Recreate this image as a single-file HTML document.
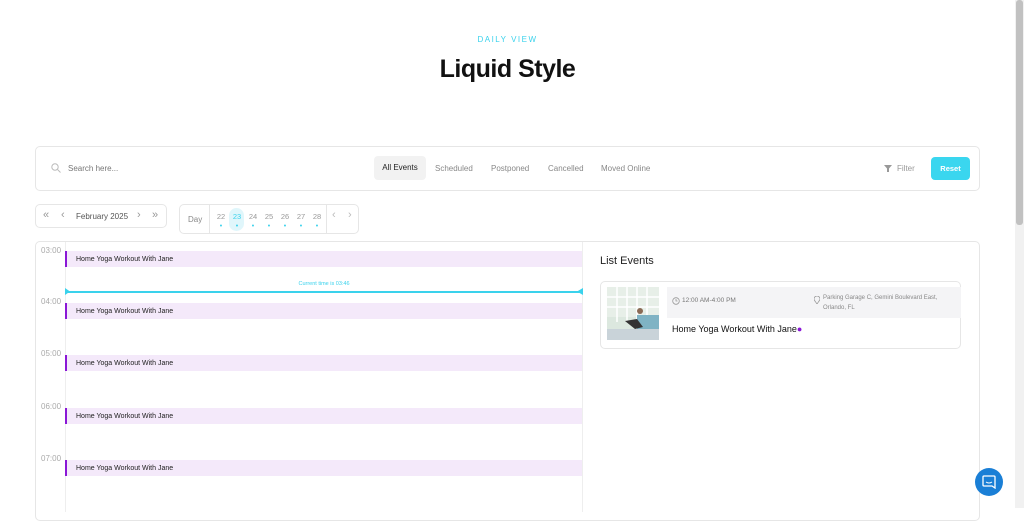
<!DOCTYPE html><html><head><style>
*{box-sizing:border-box;margin:0;padding:0}
body{width:1024px;height:508px;overflow:hidden;background:#fff;font-family:"Liberation Sans",sans-serif;position:relative;color:#222}
.a{position:absolute}
.sb{right:0;top:0;width:9px;height:508px;background:#f1f1f1}
.sb div{position:absolute;left:1px;top:0;width:7px;height:225px;background:#c1c1c1;border-radius:3px}
.box{border:1px solid #e6e6e6;border-radius:5px;background:#fff}
.t{font-size:8px;color:#666}
.ev{left:65px;width:517px;height:16px;background:#f4e9fa;border-left:2px solid #8a17d6;font-size:7px;color:#222;padding:5px 0 0 9px}
.tm{left:41px;font-size:8px;color:#aaa}
.nv{font-size:11px;color:#999;line-height:11px}
</style></head><body>
<div class="a sb"><div></div></div>
<div class="a" style="left:0;width:1015px;top:35px;text-align:center;font-size:8px;letter-spacing:1.5px;color:#3ad2ec">DAILY VIEW</div>
<div class="a" style="left:0;width:1015px;top:55px;text-align:center;font-size:25px;font-weight:bold;color:#111;letter-spacing:-0.5px">Liquid Style</div>

<div class="a box" style="left:35px;top:146px;width:945px;height:45px"></div>
<svg class="a" style="left:51px;top:163px" width="10" height="10"><circle cx="4" cy="4" r="3.2" fill="none" stroke="#bbb" stroke-width="1"/><path d="M6.5 6.5L9.5 9.5" stroke="#bbb"/></svg>
<div class="a t" style="left:68px;top:164px;color:#777">Search here...</div>
<div class="a" style="left:374px;top:156px;width:52px;height:24px;background:#f2f2f2;border-radius:4px;font-size:8px;color:#222;text-align:center;line-height:24px">All Events</div>
<div class="a t" style="left:435px;top:164px;color:#888">Scheduled</div>
<div class="a t" style="left:491px;top:164px;color:#888">Postponed</div>
<div class="a t" style="left:548px;top:164px;color:#888">Cancelled</div>
<div class="a t" style="left:601px;top:164px;color:#888">Moved Online</div>
<svg class="a" style="left:884px;top:165px" width="8" height="7"><path d="M0 0H8L5 3.5V7H3V3.5Z" fill="#999"/></svg>
<div class="a t" style="left:897px;top:164px;color:#999">Filter</div>
<div class="a" style="left:931px;top:157px;width:39px;height:23px;background:#3ad6ef;border-radius:4px;color:#fff;font-size:7.5px;font-weight:bold;text-align:center;line-height:23px">Reset</div>

<div class="a box" style="left:35px;top:204px;width:132px;height:24px"></div>
<div class="a nv" style="left:43px;top:210px">«</div>
<div class="a nv" style="left:61px;top:210px">‹</div>
<div class="a t" style="left:76px;top:212px;color:#555">February 2025</div>
<div class="a nv" style="left:137px;top:210px">›</div>
<div class="a nv" style="left:152px;top:210px">»</div>

<div class="a box" style="left:179px;top:204px;width:180px;height:30px"></div>
<div class="a" style="left:209px;top:204px;width:1px;height:30px;background:#e6e6e6"></div>
<div class="a" style="left:326px;top:204px;width:1px;height:30px;background:#e6e6e6"></div>
<div class="a t" style="left:188px;top:215px;color:#888">Day</div>
<div class="a" style="left:229px;top:208px;width:15px;height:23px;border-radius:8px;background:#e0f6fb"></div>
<div class="a" style="left:213px;top:212px;font-size:7.5px;color:#999;letter-spacing:0">
<span style="display:inline-block;width:16px;text-align:center">22</span><span style="display:inline-block;width:16px;text-align:center;color:#3ad2ec">23</span><span style="display:inline-block;width:16px;text-align:center">24</span><span style="display:inline-block;width:16px;text-align:center">25</span><span style="display:inline-block;width:16px;text-align:center">26</span><span style="display:inline-block;width:16px;text-align:center">27</span><span style="display:inline-block;width:16px;text-align:center">28</span></div>
<div class="a" style="left:213px;top:223px;font-size:7px;color:#3ad2ec">
<span style="display:inline-block;width:16px;text-align:center">•</span><span style="display:inline-block;width:16px;text-align:center">•</span><span style="display:inline-block;width:16px;text-align:center">•</span><span style="display:inline-block;width:16px;text-align:center">•</span><span style="display:inline-block;width:16px;text-align:center">•</span><span style="display:inline-block;width:16px;text-align:center">•</span><span style="display:inline-block;width:16px;text-align:center">•</span></div>
<div class="a nv" style="left:332px;top:210px;color:#bbb">‹</div>
<div class="a nv" style="left:348px;top:210px;color:#bbb">›</div>

<div class="a box" style="left:35px;top:241px;width:945px;height:280px"></div>
<div class="a" style="left:65px;top:242px;width:1px;height:270px;background:#eee"></div>
<div class="a" style="left:582px;top:242px;width:1px;height:270px;background:#eee"></div>
<div class="a tm" style="top:246px">03:00</div>
<div class="a tm" style="top:297px">04:00</div>
<div class="a tm" style="top:349px">05:00</div>
<div class="a tm" style="top:402px">06:00</div>
<div class="a tm" style="top:454px">07:00</div>
<div class="a ev" style="top:251px">Home Yoga Workout With Jane</div>
<div class="a ev" style="top:303px">Home Yoga Workout With Jane</div>
<div class="a ev" style="top:355px">Home Yoga Workout With Jane</div>
<div class="a ev" style="top:408px">Home Yoga Workout With Jane</div>
<div class="a ev" style="top:460px">Home Yoga Workout With Jane</div>
<div class="a" style="left:66px;top:291px;width:516px;height:1.5px;background:#3ad2ec"></div>
<svg class="a" style="left:65px;top:288px" width="518" height="7"><path d="M0 0L5 3.5L0 7Z M518 0L512 3.5L518 7Z" fill="#3ad2ec"/></svg>
<div class="a" style="left:66px;top:281px;width:516px;text-align:center;font-size:5.5px;color:#3ad2ec">Current time is 03:46</div>

<div class="a" style="left:600px;top:255px;font-size:11px;color:#222">List Events</div>
<div class="a box" style="left:600px;top:281px;width:361px;height:68px"></div>
<svg class="a" style="left:607px;top:287px" width="52" height="53"><rect width="52" height="53" rx="3" fill="#dce8df"/><rect x="0" y="0" width="52" height="30" fill="#e7efe8"/><path d="M10 0V35M20 0V35M30 0V35M40 0V35M0 10H52M0 20H52" stroke="#fff" stroke-width="1.5"/><rect x="30" y="28" width="22" height="14" fill="#7fb3c4"/><rect x="0" y="42" width="52" height="11" fill="#c9d3d9"/><path d="M18 34L30 32L36 40L28 42Z" fill="#333"/><circle cx="33" cy="24" r="3" fill="#8a6a55"/></svg>
<div class="a" style="left:667px;top:287px;width:294px;height:31px;background:#f4f4f6"></div>
<svg class="a" style="left:672px;top:297px" width="8" height="8"><circle cx="4" cy="4" r="3.3" fill="none" stroke="#999" stroke-width="0.8"/><path d="M4 2V4H5.5" stroke="#999" stroke-width="0.8" fill="none"/></svg>
<div class="a" style="left:682px;top:297px;font-size:6.5px;color:#777">12:00 AM-4:00 PM</div>
<svg class="a" style="left:814px;top:296px" width="6" height="8"><path d="M3 8C1 5 0 4 0 3A3 3 0 0 1 6 3C6 4 5 5 3 8Z" fill="none" stroke="#999" stroke-width="0.8"/></svg>
<div class="a" style="left:823px;top:293px;font-size:6px;line-height:10px;color:#888">Parking Garage C, Gemini Boulevard East,<br>Orlando, FL</div>
<div class="a" style="left:672px;top:324px;font-size:9px;color:#111">Home Yoga Workout With Jane<span style="color:#8a17d6">●</span></div>

<div class="a" style="left:975px;top:468px;width:28px;height:28px;border-radius:50%;background:#1a7fd6"></div>
<svg class="a" style="left:982px;top:475px" width="14" height="14"><path d="M2 1H12A1 1 0 0 1 13 2V13L10 11H2A1 1 0 0 1 1 10V2A1 1 0 0 1 2 1Z" fill="none" stroke="#fff" stroke-width="1.3"/><path d="M4 7Q7 9 10 7" stroke="#fff" fill="none" stroke-width="1"/></svg>
</body></html>
